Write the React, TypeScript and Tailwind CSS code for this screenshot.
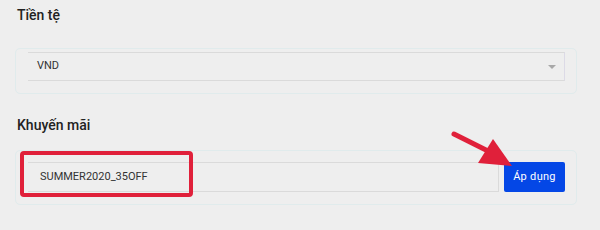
import React from "react";

const App: React.FC = () => {
  return (
    <div
      className="relative w-[600px] h-[230px] overflow-hidden bg-[#eeeeee] text-[#222]"
      style={{ fontFamily: "Roboto, 'Liberation Sans', sans-serif" }}
    >
      {/* Currency */}
      <div className="pt-[5px] pl-[17px] text-[14px] leading-[20px] font-medium">Tiền tệ</div>
      <div className="mt-[23px] ml-[15px] w-[562px] rounded-[5px] border border-[#e0ebec] pt-[3px] pb-[12px] pl-[12px] pr-[11px]">
        <div className="flex h-[29px] items-center justify-between border-y border-r border-[#dadada] border-r-[#dcdae6] pl-[9px] pr-[8px]">
          <span className="text-[11px] text-[#333]">VND</span>
          <span className="h-0 w-0 border-x-[4px] border-t-[4px] border-x-transparent border-t-[#a8a8a8]" />
        </div>
      </div>

      {/* Promotion */}
      <div className="mt-[21px] pl-[17px] text-[14px] leading-[20px] font-medium">Khuyến mãi</div>
      <div className="mt-[15px] ml-[15px] w-[562px] rounded-[5px] border border-[#e0ebec] pt-[11px] pb-[12px] pl-[12px] pr-[11px]">
        <div className="flex h-[30px] items-stretch gap-[5px]">
          <div className="flex flex-1 items-center border-y border-r border-[#dadada] pl-[12px]">
            <span className="text-[11px] text-[#333]">SUMMER2020_35OFF</span>
          </div>
          <button className="w-[61px] rounded-[2px] bg-[#0447e6] text-[11px] tracking-[0.3px] text-white">
            Áp dụng
          </button>
        </div>
      </div>

      {/* Annotation overlays */}
      <div className="absolute left-[20px] top-[151px] h-[46px] w-[173px] rounded-[4px] border-[4px] border-[#e0203a]" />
      <svg className="absolute left-0 top-0" width="600" height="230" viewBox="0 0 600 230">
        <line x1="454" y1="134" x2="490" y2="152" stroke="#e0203a" strokeWidth="5" strokeLinecap="round" />
        <polygon points="493,139 512,166 478,163" fill="#e0203a" />
      </svg>
    </div>
  );
};

export default App;
